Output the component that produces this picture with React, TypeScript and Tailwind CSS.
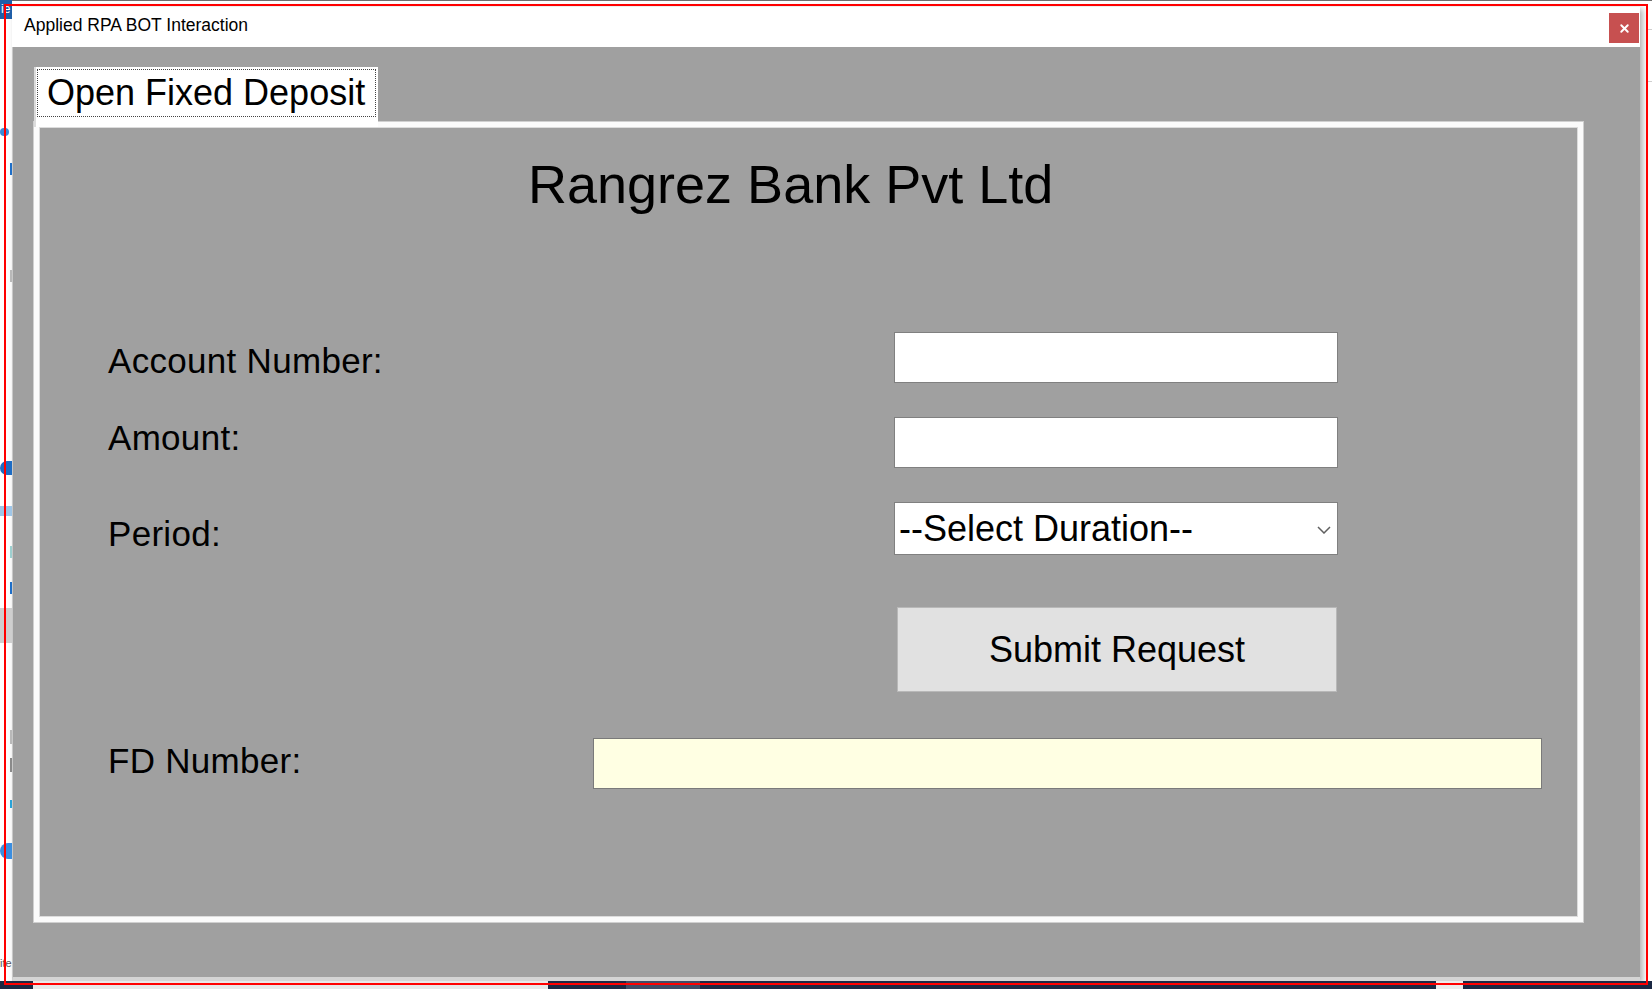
import { X } from "lucide-react";

function Label({ text, width, top }: { text: string; width: string; top: string }) {
  return (
    <label className={`${width} ${top} shrink-0 text-[35px] leading-[40px] tracking-[0.3px] text-black`}>
      {text}
    </label>
  );
}

export default function App() {
  return (
    <div className="relative w-[1652px] h-[989px] overflow-hidden bg-white font-['Liberation_Sans',Arial,sans-serif] text-black">
      {/* bits of the desktop peeking out on the left */}
      <div className="absolute left-0 top-0 w-[12px] h-[19px] bg-[#1f5fa8] pl-[1px] text-[12px] leading-[19px] text-white">ie</div>
      <div className="absolute left-0 top-[128px] w-[9px] h-[8px] rounded-sm bg-[#3a8ad8]" />
      <div className="absolute left-[10px] top-[163px] w-[2px] h-[12px] bg-[#1f6fc8]" />
      <div className="absolute left-[10px] top-[270px] w-[2px] h-[12px] bg-[#b9b9b9]" />
      <div className="absolute left-0 top-[461px] w-[12px] h-[14px] rounded-l-full bg-[#1d6cc4]" />
      <div className="absolute left-0 top-[506px] w-[12px] h-[10px] bg-[#9fc6e8]" />
      <div className="absolute left-[10px] top-[546px] w-[2px] h-[12px] bg-[#9dd0d0]" />
      <div className="absolute left-[10px] top-[582px] w-[2px] h-[12px] bg-[#1f6fc8]" />
      <div className="absolute left-0 top-[608px] w-[12px] h-[35px] bg-[#cfcfcf]" />
      <div className="absolute left-[10px] top-[730px] w-[2px] h-[14px] bg-[#b9b9b9]" />
      <div className="absolute left-[10px] top-[758px] w-[2px] h-[14px] bg-[#8a8a8a]" />
      <div className="absolute left-[10px] top-[800px] w-[2px] h-[8px] bg-[#29a3d8]" />
      <div className="absolute left-0 top-[843px] w-[12px] h-[16px] rounded-l-full bg-[#3b8ee0]" />
      <div className="absolute left-0 top-[956px] text-[11px] leading-[14px] text-[#555]">ite</div>
      <div className="absolute right-0 top-[29px] w-[6px] h-px bg-[#cfcfcf]" />
      <div className="absolute right-0 top-[81px] w-[6px] h-px bg-[#cfcfcf]" />

      <div className="flex flex-col h-full">
        <div className="h-px bg-[#6e6e6e]" />

        {/* window */}
        <div className="ml-[12px] mt-[6px] w-[1628px] h-[974px] flex flex-col shadow-[3px_2px_6px_rgba(0,0,0,0.3)]">
          <div className="h-[40px] shrink-0 bg-white flex items-start justify-between">
            <span className="mt-[8px] pl-[12px] text-[17.5px] leading-[20px] text-black">
              Applied RPA BOT Interaction
            </span>
            <button className="mt-[6px] mr-px w-[30px] h-[30px] bg-[#c75050] flex items-center justify-center">
              <X size={13} strokeWidth={3.5} color="#ffffff" />
            </button>
          </div>

          <div className="flex-1 bg-[#a0a0a0] border-l border-[#c8c8c8] border-b-4 border-b-[#d4d4d4] pl-[21px] pt-[20px]">
            {/* tab header */}
            <div className="relative z-10 -mb-[5px] w-[344px] h-[60px] bg-white border-l-2 border-[#dcdcdc] pt-[2px] pl-px">
              <div className="w-[339px] h-[48px] border border-dotted border-[#444] pl-[9px] pt-[3px] text-[36px] leading-[40px]">
                Open Fixed Deposit
              </div>
            </div>

            {/* tab page */}
            <div className="w-[1549px] h-[800px] border-[5px] border-[#fbfbfb] shadow-[inset_0_0_0_1px_#dcdcdc,0_0_0_1px_#d0d0d0] pl-[69px]">
              <h1 className="mt-[27px] ml-[420px] text-[54px] leading-[60px] font-normal">
                Rangrez Bank Pvt Ltd
              </h1>

              <div className="mt-[118px] flex items-start">
                <Label text="Account Number:" width="w-[786px]" top="mt-[9px]" />
                <input className="w-[444px] h-[51px] bg-white border border-[#808080] outline-none" />
              </div>

              <div className="mt-[34px] flex items-start">
                <Label text="Amount:" width="w-[786px]" top="mt-px" />
                <input className="w-[444px] h-[51px] bg-white border border-[#808080] outline-none" />
              </div>

              <div className="mt-[34px] flex items-start">
                <Label text="Period:" width="w-[786px]" top="mt-[12px]" />
                <div className="relative w-[444px] h-[53px] bg-white border border-[#808080] flex items-center pl-[4px] text-[36px] leading-[40px]">
                  --Select Duration--
                  <svg
                    className="absolute right-[6px] top-[23px]"
                    width="14"
                    height="8"
                    viewBox="0 0 14 8"
                    fill="none"
                  >
                    <path d="M1 1 L7 7 L13 1" stroke="#606060" strokeWidth="1.5" />
                  </svg>
                </div>
              </div>

              <button className="mt-[52px] ml-[789px] w-[440px] h-[85px] bg-[#e1e1e1] border border-[#b8b8b8] text-[36px] leading-[40px] text-black">
                Submit Request
              </button>

              <div className="mt-[46px] flex items-start">
                <Label text="FD Number:" width="w-[485px]" top="mt-[3px]" />
                <input className="w-[949px] h-[51px] bg-[#ffffe3] border border-[#7a7a7a] outline-none" />
              </div>
            </div>
          </div>
        </div>

        {/* taskbar strip below the window */}
        <div className="h-[8px] flex">
          <div className="w-[33px] bg-[#1b2843]" />
          <div className="w-[515px] bg-[#e8e8e8]" />
          <div className="w-[78px] bg-[#1b2843]" />
          <div className="w-[74px] bg-[#414c66]" />
          <div className="w-[736px] bg-[#1b2843]" />
          <div className="w-[27px] bg-[#ececec]" />
          <div className="flex-1 bg-[#1b2843]" />
        </div>
      </div>

      {/* red capture outline */}
      <div className="pointer-events-none absolute left-[4px] top-[4px] w-[1644px] h-[981px] border-2 border-[#ff0000]" />
    </div>
  );
}
